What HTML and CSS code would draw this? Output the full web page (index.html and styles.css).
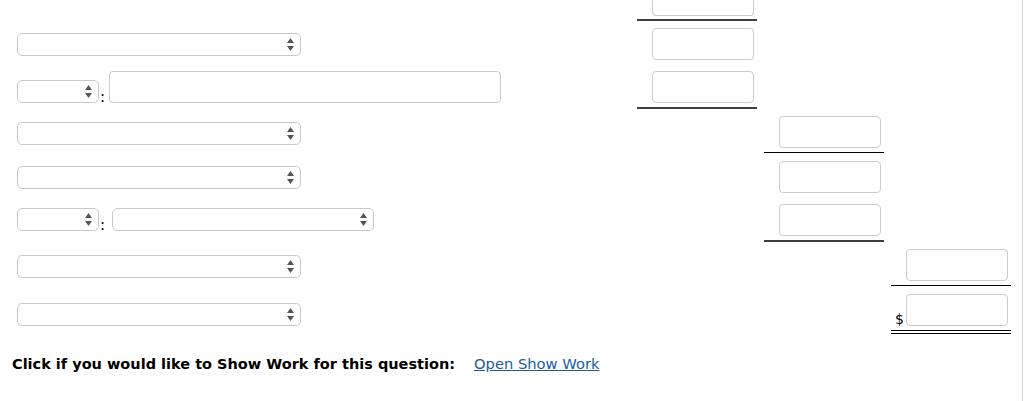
FILE: index.html
```html
<!DOCTYPE html>
<html lang="en">
<head>
<meta charset="utf-8">
<title>Worksheet</title>
<link rel="stylesheet" href="styles.css">
</head>
<body>
<div class="page">
  <div class="sheet">
    <div class="left">
      <div class="row r1">
        <div class="sel wide"><svg class="arr" width="7" height="13" viewBox="0 0 7 13"><polygon points="0,5 3.5,0 7,5"/><polygon points="0,8 7,8 3.5,13"/></svg></div>
      </div>
      <div class="row r2">
        <div class="sel small"><svg class="arr" width="7" height="13" viewBox="0 0 7 13"><polygon points="0,5 3.5,0 7,5"/><polygon points="0,8 7,8 3.5,13"/></svg></div>
        <span class="colon">:</span>
        <div class="txt"></div>
      </div>
      <div class="row r3">
        <div class="sel wide"><svg class="arr" width="7" height="13" viewBox="0 0 7 13"><polygon points="0,5 3.5,0 7,5"/><polygon points="0,8 7,8 3.5,13"/></svg></div>
      </div>
      <div class="row r4">
        <div class="sel wide"><svg class="arr" width="7" height="13" viewBox="0 0 7 13"><polygon points="0,5 3.5,0 7,5"/><polygon points="0,8 7,8 3.5,13"/></svg></div>
      </div>
      <div class="row r5">
        <div class="sel small"><svg class="arr" width="7" height="13" viewBox="0 0 7 13"><polygon points="0,5 3.5,0 7,5"/><polygon points="0,8 7,8 3.5,13"/></svg></div>
        <span class="colon">:</span>
        <div class="sel mid"><svg class="arr" width="7" height="13" viewBox="0 0 7 13"><polygon points="0,5 3.5,0 7,5"/><polygon points="0,8 7,8 3.5,13"/></svg></div>
      </div>
      <div class="row r6">
        <div class="sel wide"><svg class="arr" width="7" height="13" viewBox="0 0 7 13"><polygon points="0,5 3.5,0 7,5"/><polygon points="0,8 7,8 3.5,13"/></svg></div>
      </div>
      <div class="row r7">
        <div class="sel wide"><svg class="arr" width="7" height="13" viewBox="0 0 7 13"><polygon points="0,5 3.5,0 7,5"/><polygon points="0,8 7,8 3.5,13"/></svg></div>
      </div>
    </div>

    <div class="col c1">
      <div class="cell first rule-thick"><div class="box cut"></div></div>
      <div class="cell gap7"><div class="box"></div></div>
      <div class="cell gap7 rule-thick"><div class="box"></div></div>
    </div>

    <div class="col c2">
      <div class="cell c2-first rule-thin"><div class="box"></div></div>
      <div class="cell gap8"><div class="box"></div></div>
      <div class="cell gap7 rule-thick"><div class="box"></div></div>
    </div>

    <div class="col c3">
      <div class="cell c3-first rule-thin"><div class="box"></div></div>
      <div class="cell gap8 rule-double dollar-cell"><span class="dollar">$</span><div class="box"></div></div>
    </div>
  </div>

  <p class="showwork">Click if you would like to Show Work for this question:<a class="swlink" href="#">Open Show Work</a></p>
</div>
</body>
</html>
```

FILE: styles.css
```css
html, body {
  margin: 0;
  padding: 0;
  background: #ffffff;
}

.page {
  width: 1022px;
  min-height: 401px;
  border-right: 1px solid #d6d6d6;
  font-family: "DejaVu Sans", Verdana, sans-serif;
  color: #000;
}

.sheet {
  display: flex;
  align-items: flex-start;
  column-gap: 7px;
}

.left {
  width: 613px;
  padding-left: 17px;
  display: flex;
  flex-direction: column;
}

.row {
  display: flex;
  align-items: flex-end;
}

.r1 { margin-top: 33px; }
.r2 { margin-top: 15px; }
.r3 { margin-top: 19px; }
.r4 { margin-top: 21px; }
.r5 { margin-top: 19px; }
.r6 { margin-top: 24px; }
.r7 { margin-top: 25px; }

.sel {
  box-sizing: border-box;
  height: 23px;
  border: 1px solid #c9c9c9;
  border-radius: 5px;
  background: #fff;
  display: flex;
  align-items: center;
  justify-content: flex-end;
  padding-right: 6px;
}

.sel.wide { width: 284px; }
.sel.small { width: 82px; }
.sel.mid { width: 262px; margin-left: 7px; }

.arr { fill: #555555; display: block; }

.colon {
  font-size: 15px;
  line-height: 15px;
  margin-left: 1px;
  margin-bottom: -2px;
}

.txt {
  box-sizing: border-box;
  width: 392px;
  height: 32px;
  margin-left: 4px;
  border: 1px solid #cbcbcb;
  border-radius: 4px;
  background: #fff;
}

.col {
  width: 120px;
  display: flex;
  flex-direction: column;
}

.cell {
  padding-left: 15px;
  padding-bottom: 4px;
}

.cell.first { padding-bottom: 3px; }
.c2-first { margin-top: 116px; }
.c3-first { margin-top: 249px; }
.gap7 { margin-top: 7px; }
.gap8 { margin-top: 8px; }

.rule-thick { border-bottom: 2px solid #3e3e3e; }
.rule-thin { border-bottom: 1px solid #000; }
.rule-double { border-bottom: 4px double #000; }

.box {
  box-sizing: border-box;
  width: 102px;
  height: 32px;
  border: 1px solid #cccccc;
  border-radius: 4px;
  background: #fff;
}

.box.cut {
  height: 16px;
  border-top: none;
  border-radius: 0 0 4px 4px;
}

.dollar-cell {
  display: flex;
  align-items: flex-end;
  padding-left: 4px;
}

.dollar {
  font-size: 14px;
  line-height: 14px;
  width: 11px;
  margin-bottom: 0;
}

.showwork {
  margin: 21px 0 0 0;
  padding-left: 12px;
  font-size: 14.5px;
  line-height: 17px;
  font-weight: bold;
}

.swlink {
  margin-left: 19px;
  font-weight: normal;
  font-size: 14.7px;
  color: #1b5c99;
  text-decoration: underline;
}
```
